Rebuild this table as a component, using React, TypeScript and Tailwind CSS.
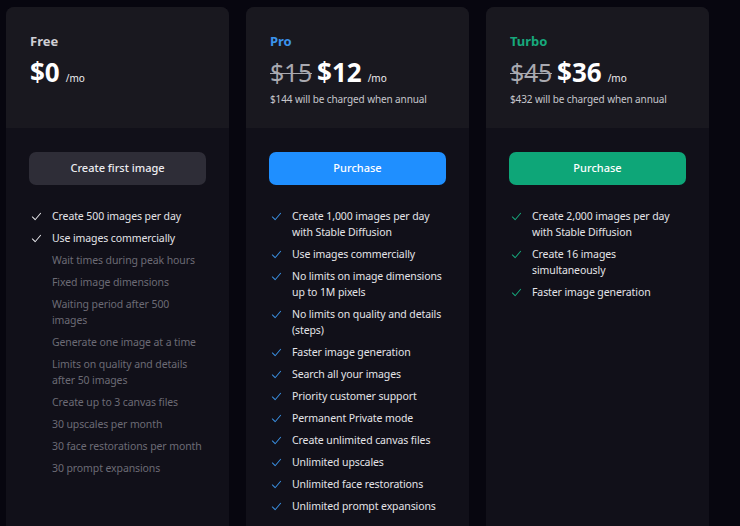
import React from "react";

type Plan = {
  name: string;
  nameClass: string;
  oldPrice?: string;
  price: string;
  note?: string;
  button: string;
  buttonClass: string;
  checkClass: string;
  features: { text: string; included: boolean }[];
};

const plans: Plan[] = [
  {
    name: "Free",
    nameClass: "text-[#cfcfd4]",
    price: "$0",
    button: "Create first image",
    buttonClass: "bg-[#2e2d37] text-[#ececf0]",
    checkClass: "text-[#e6e6ea]",
    features: [
      { text: "Create 500 images per day", included: true },
      { text: "Use images commercially", included: true },
      { text: "Wait times during peak hours", included: false },
      { text: "Fixed image dimensions", included: false },
      { text: "Waiting period after 500 images", included: false },
      { text: "Generate one image at a time", included: false },
      { text: "Limits on quality and details after 50 images", included: false },
      { text: "Create up to 3 canvas files", included: false },
      { text: "30 upscales per month", included: false },
      { text: "30 face restorations per month", included: false },
      { text: "30 prompt expansions", included: false },
    ],
  },
  {
    name: "Pro",
    nameClass: "text-[#3b93ec]",
    oldPrice: "$15",
    price: "$12",
    note: "$144 will be charged when annual",
    button: "Purchase",
    buttonClass: "bg-[#1f8fff] text-white",
    checkClass: "text-[#3a8fe0]",
    features: [
      "Create 1,000 images per day with Stable Diffusion",
      "Use images commercially",
      "No limits on image dimensions up to 1M pixels",
      "No limits on quality and details (steps)",
      "Faster image generation",
      "Search all your images",
      "Priority customer support",
      "Permanent Private mode",
      "Create unlimited canvas files",
      "Unlimited upscales",
      "Unlimited face restorations",
      "Unlimited prompt expansions",
    ].map((text) => ({ text, included: true })),
  },
  {
    name: "Turbo",
    nameClass: "text-[#17a87c]",
    oldPrice: "$45",
    price: "$36",
    note: "$432 will be charged when annual",
    button: "Purchase",
    buttonClass: "bg-[#0ea678] text-white",
    checkClass: "text-[#17a87c]",
    features: [
      "Create 2,000 images per day with Stable Diffusion",
      "Create 16 images simultaneously",
      "Faster image generation",
    ].map((text) => ({ text, included: true })),
  },
];

function Check({ className }: { className: string }) {
  return (
    <svg viewBox="0 0 12 12" className={`h-[11px] w-[11px] ${className}`} fill="none">
      <path d="M1.5 6.5 L4.5 9.5 L10.5 2.5" stroke="currentColor" strokeWidth="1.1" strokeLinecap="round" strokeLinejoin="round" />
    </svg>
  );
}

function PlanCard({ plan }: { plan: Plan }) {
  return (
    <div className="w-[223px] shrink-0 overflow-hidden rounded-[8px] bg-[#111019]">
      {/* header */}
      <div className="h-[121px] bg-[#19181f] px-[24px] pt-[26px]">
        <div className={`text-[13px] font-bold leading-[16px] ${plan.nameClass}`}>{plan.name}</div>
        <div className="mt-[8px] flex items-baseline">
          {plan.oldPrice && (
            <span className="mr-[5px] text-[25px] leading-[30px] tracking-[-0.3px] text-[#a9a9b0] line-through decoration-1">
              {plan.oldPrice}
            </span>
          )}
          <span className="text-[26px] font-bold leading-[30px] text-white">{plan.price}</span>
          <span className="ml-[6px] text-[10px] text-[#ededf0]">/mo</span>
        </div>
        {plan.note && (
          <div className="mt-[5px] text-[10px] leading-[14px] tracking-[-0.1px] text-[#c6c6cc]">{plan.note}</div>
        )}
      </div>

      {/* body */}
      <div className="px-[23px] pb-[24px] pt-[24px]">
        <button className={`h-[33px] w-full rounded-[7px] text-[11px] font-medium ${plan.buttonClass}`}>
          {plan.button}
        </button>
        <ul className="mt-[23px] flex flex-col gap-[6px]">
          {plan.features.map((f) => (
            <li key={f.text} className="flex items-start">
              <span className="flex h-[16px] w-[23px] shrink-0 items-center pl-[2px]">
                {f.included && <Check className={plan.checkClass} />}
              </span>
              <span
                className={`text-[10.5px] leading-[16px] tracking-[-0.1px] ${
                  f.included ? "text-[#e4e4e8]" : "text-[#6c6b75]"
                }`}
              >
                {f.text}
              </span>
            </li>
          ))}
        </ul>
      </div>
    </div>
  );
}

export default function App() {
  return (
    <div
      className="h-[526px] w-[740px] overflow-hidden bg-[#07060f] pl-[6px] pt-[7px]"
      style={{ fontFamily: '"Noto Sans", "Open Sans", sans-serif' }}
    >
      <div className="flex gap-[17px]">
        {plans.map((p) => (
          <PlanCard key={p.name} plan={p} />
        ))}
      </div>
    </div>
  );
}
